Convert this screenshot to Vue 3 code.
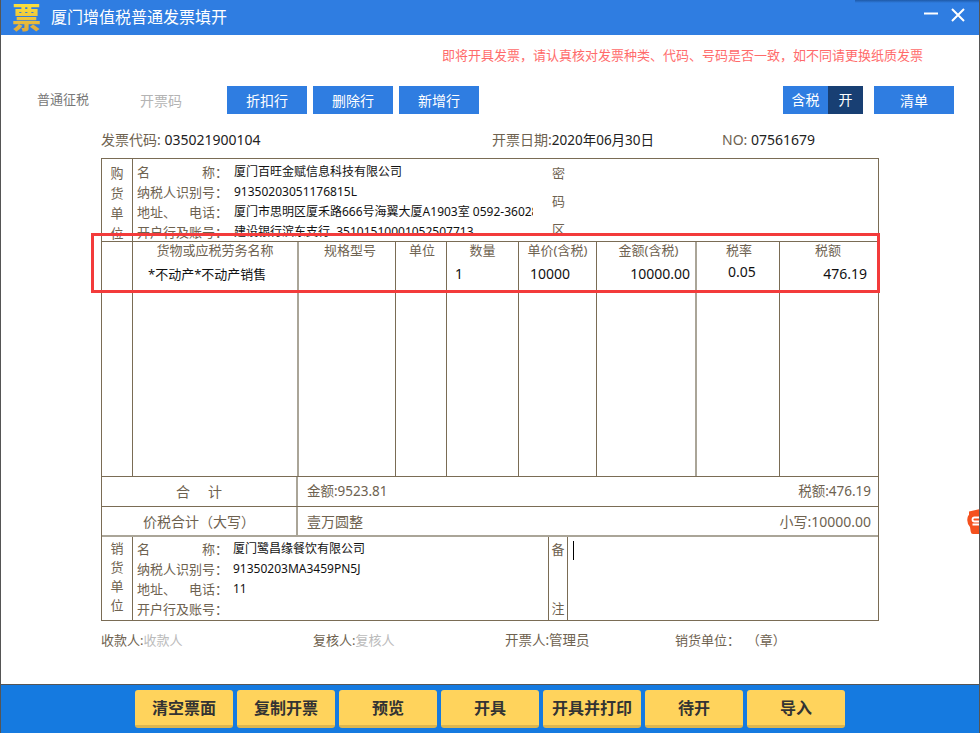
<script setup>
const topButtons = ['折扣行', '删除行', '新增行']
const buyer = [
  { label: ['名', '称：'], value: '厦门百旺金赋信息科技有限公司' },
  { label: ['纳税人识别号：'], value: '91350203051176815L' },
  { label: ['地址、', '电话：'], value: '厦门市思明区厦禾路666号海翼大厦A1903室 0592-3602888' },
  { label: ['开户行及账号：'], value: '建设银行滨东支行\u00a0 35101510001052507713' }
]
const seller = [
  { label: ['名', '称：'], value: '厦门鹭昌缘餐饮有限公司' },
  { label: ['纳税人识别号：'], value: '91350203MA3459PN5J' },
  { label: ['地址、', '电话：'], value: '11' },
  { label: ['开户行及账号：'], value: '' }
]
const columns = [
  { cls: 'c-blank', head: '', data: '' },
  { cls: 'c-name soft', head: '货物或应税劳务名称', data: '*不动产*不动产销售' },
  { cls: 'c-spec', head: '规格型号', data: '' },
  { cls: 'c-unit', head: '单位', data: '' },
  { cls: 'c-qty', head: '数量', data: '1' },
  { cls: 'c-price', head: '单价(含税)', data: '10000' },
  { cls: 'c-amount soft', head: '金额(含税)', data: '10000.00' },
  { cls: 'c-rate', head: '税率', data: '0.05' },
  { cls: 'c-tax', head: '税额', data: '476.19' }
]
const actions = ['清空票面', '复制开票', '预览', '开具', '开具并打印', '待开', '导入']
</script>

<template>
  <div class="window">
    <header class="titlebar">
      <span class="logo">票</span>
      <span class="title">厦门增值税普通发票填开</span>
      <div class="win-controls">
        <svg width="14" height="14" viewBox="0 0 14 14"><path d="M0 5.500h14" stroke="#fff" stroke-width="2" /></svg>
        <svg width="14" height="14" viewBox="0 0 14 14"><path d="M1 1l12 12M13 1L1 13" stroke="#fff" stroke-width="2" /></svg>
      </div>
      <i class="top-shadow"></i>
    </header>

    <main class="body">
      <p class="notice">即将开具发票，请认真核对发票种类、代码、号码是否一致，如不同请更换纸质发票</p>

      <div class="toolbar">
        <span class="tab">普通征税</span>
        <span class="tab-off">开票码</span>
        <button v-for="b in topButtons" :key="b" class="blue-btn">{{ b }}</button>
        <div class="toolbar-right">
          <div class="toggle"><span class="toggle-a">含税</span><span class="toggle-b">开</span></div>
          <button class="blue-btn list-btn">清单</button>
        </div>
      </div>

      <div class="meta">
        <span class="meta-code"><i>发票代码:</i> 035021900104</span>
        <span class="meta-date"><i>开票日期:</i><b>2020年06月30日</b></span>
        <span class="meta-no"><i>NO:</i> 07561679</span>
      </div>

      <section class="invoice">
        <div class="party buyer">
          <div class="side"><span>购</span><span>货</span><span>单</span><span>位</span></div>
          <div class="fields">
            <div v-for="f in buyer" :key="f.label.join()" class="field">
              <span class="label"><span v-for="p in f.label" :key="p">{{ p }}</span></span>
              <span class="value">{{ f.value }}</span>
            </div>
          </div>
          <div class="secret"><span>密</span><span>码</span><span>区</span></div>
        </div>

        <div class="items">
          <div v-for="c in columns" :key="c.cls" class="col" :class="c.cls">
            <div class="col-head">{{ c.head }}</div>
            <div class="col-data">{{ c.data }}</div>
          </div>
        </div>

        <div class="sum-row">
          <div class="sum-left">合&nbsp;&nbsp;&nbsp;&nbsp;&nbsp;计</div>
          <div class="sum-right amounts"><span>金额:9523.81</span><span>税额:476.19</span></div>
        </div>
        <div class="sum-row total">
          <div class="sum-left">价税合计（大写）</div>
          <div class="sum-right"><span>壹万圆整</span><span>小写:10000.00</span></div>
        </div>

        <div class="party seller">
          <div class="side"><span>销</span><span>货</span><span>单</span><span>位</span></div>
          <div class="fields">
            <div v-for="f in seller" :key="f.label.join()" class="field">
              <span class="label"><span v-for="p in f.label" :key="p">{{ p }}</span></span>
              <span class="value">{{ f.value }}</span>
            </div>
          </div>
          <div class="remark-side"><span>备</span><span>注</span></div>
          <div class="remark"><i class="caret"></i></div>
        </div>
      </section>

      <div class="signers">
        <span class="s1">收款人:<em>收款人</em></span>
        <span class="s2">复核人:<em>复核人</em></span>
        <span class="s3">开票人:管理员</span>
        <span class="s4">销货单位：&nbsp; （章）</span>
      </div>

      <div class="red-box"></div>
      <svg class="float-icon" width="13" height="25" viewBox="0 0 13 25">
        <path d="M2 2.500L13 0v25H6Q4 25 3.700 22.500L3 18Q0 14.500 .3 10.500T2 6z" fill="#f4511e" />
        <path d="M13 8.500H7.500Q5.500 8.500 5.500 10.500T7.500 12.500H13M5.500 15.500H13" fill="none" stroke="#fff" stroke-width="1.800" />
      </svg>
    </main>

    <footer class="footer">
      <button v-for="a in actions" :key="a" class="yellow-btn">{{ a }}</button>
    </footer>
  </div>
</template>

<style scoped>
.window {
  position: relative;
  box-sizing: border-box;
  display: flex;
  flex-direction: column;
  width: 980px;
  height: 733px;
  overflow: hidden;
  background: #fff;
  border-left: 1px solid #555;
  border-right: 1px solid #555;
  font-family: "Noto Sans", "Noto Sans CJK SC", sans-serif;
  font-size: 13px;
  color: #6e6250;
}
.titlebar {
  position: relative;
  display: flex;
  align-items: center;
  flex: none;
  height: 35px;
  margin: 0 -1px;
  padding-left: 12px;
  background: #2f7de1;
  color: #fff;
}
.top-shadow {
  position: absolute;
  top: 0;
  right: 0;
  width: 125px;
  height: 3px;
  background: linear-gradient(#1f5aa8, #2f7de1);
}
.logo {
  flex: none;
  width: 30px;
  font-size: 29px;
  line-height: 35px;
  font-weight: 900;
  background: linear-gradient(#ffe83c, #dca23a);
  -webkit-background-clip: text;
  background-clip: text;
  color: transparent;
}
.title {
  margin-left: 9px;
  font-size: 16px;
  line-height: 35px;
}
.win-controls {
  display: flex;
  gap: 13px;
  margin-left: auto;
  margin-right: 15px;
  margin-top: -6px;
}
.body {
  position: relative;
  flex: 1;
  min-height: 0;
}
.notice {
  margin: 0;
  padding: 11px 56px 0 0;
  height: 39px;
  box-sizing: border-box;
  text-align: right;
  line-height: 18px;
  color: #ff6b6b;
}
.toolbar {
  display: flex;
  align-items: center;
  height: 28px;
  margin-left: 36px;
  margin-right: 25px;
  margin-top: 12px;
}
.tab { width: 103px; padding-bottom: 3px; color: #777; }
.tab-off { width: 87px; font-size: 14px; color: #b4b4b4; }
.blue-btn {
  width: 80px;
  height: 28px;
  margin-right: 6px;
  padding: 0;
  border: 0;
  background: #2f7de1;
  color: #fff;
  font: inherit;
  font-size: 14px;
}
.toolbar-right {
  display: flex;
  margin-left: auto;
}
.toggle {
  display: flex;
  height: 28px;
  margin-right: 11px;
  line-height: 28px;
  font-size: 14px;
  color: #fff;
  text-align: center;
}
.toggle-a { width: 45px; background: #2f7de1; }
.toggle-b { width: 35px; background: #183f73; }
.list-btn { margin-right: 0; }
.meta {
  display: flex;
  height: 20px;
  margin-top: 16px;
  margin-left: 100px;
  line-height: 20px;
  font-size: 14px;
  color: #222;
}
.meta i { font-style: normal; color: #6e6250; }
.meta b { font-weight: 400; font-size: 13.5px; }
.meta-code { width: 391px; }
.meta-date { width: 230px; }
.invoice {
  box-sizing: border-box;
  width: 778px;
  margin-top: 8px;
  margin-left: 100px;
  border: 1px solid #7a6c55;
}
.party { display: flex; }
.buyer {
  height: 83px;
  box-sizing: border-box;
  overflow: hidden;
  border-bottom: 1px solid #7a6c55;
}
.seller { height: 83px; }
.side {
  box-sizing: border-box;
  display: flex;
  flex-direction: column;
  flex: none;
  width: 31px;
  padding-top: 4px;
  border-right: 1px solid #7a6c55;
  line-height: 20px;
  text-align: center;
}
.fields {
  box-sizing: border-box;
  flex: none;
  width: 400px;
  padding-left: 4px;
  padding-top: 3px;
  overflow: hidden;
}
.seller .fields { width: 415px; padding-top: 2px; }
.seller .side { padding-top: 2px; line-height: 19px; }
.field {
  display: flex;
  height: 20px;
  line-height: 20px;
  white-space: nowrap;
}
.label {
  display: flex;
  justify-content: space-between;
  flex: none;
  width: 91px;
  margin-right: 6px;
}
.value {
  font-size: 12px;
  color: #111;
}
.seller .label { margin-right: 5px; }
.secret {
  display: flex;
  flex-direction: column;
  gap: 8px;
  margin-left: 19px;
  padding-top: 4px;
  line-height: 20px;
}
.items {
  display: flex;
  height: 234px;
}
.col {
  box-sizing: border-box;
  flex: none;
  border-right: 1px solid #7a6c55;
}
.col.soft { border-right: 2px solid #aaa598; }
.c-tax { border-right: 0; }
.c-blank { width: 31px; }
.c-name { width: 166px; }
.c-spec { width: 97px; }
.c-unit { width: 51px; }
.c-qty { width: 72px; }
.c-price { width: 78px; }
.c-amount { width: 100px; }
.c-rate { width: 83px; }
.c-tax { width: 98px; }
.col-head {
  height: 20px;
  line-height: 17px;
  text-align: center;
}
.c-spec .col-head { padding-left: 6px; }
.c-unit .col-head { padding-left: 2px; }
.c-amount .col-head { padding-left: 5px; }
.c-rate .col-head { padding-left: 2px; }
.c-tax .col-head { padding-right: 2px; }
.col-data {
  height: 24px;
  line-height: 24px;
  font-size: 14px;
  color: #111;
  white-space: nowrap;
}
.c-name .col-data { padding-left: 15px; font-size: 13px; }
.c-qty .col-data { padding-left: 8px; }
.c-price .col-data { padding-left: 11px; }
.c-amount .col-data { padding-right: 5px; text-align: right; }
.c-rate .col-data { margin-top: -2px; padding-left: 31px; }
.c-tax .col-data { padding-right: 11px; text-align: right; }
.sum-row {
  display: flex;
  box-sizing: border-box;
  height: 30px;
  border-top: 1px solid #7a6c55;
  line-height: 29px;
  font-size: 14px;
}
.sum-row.total { border-bottom: 2px solid #aaa598; height: 31px; }
.sum-left {
  box-sizing: border-box;
  width: 196px;
  border-right: 2px solid #aaa598;
  text-align: center;
}
.sum-right {
  display: flex;
  justify-content: space-between;
  flex: 1;
  padding: 0 7px 0 9px;
}
.amounts { font-size: 13.5px; }
.remark-side {
  box-sizing: border-box;
  display: flex;
  flex-direction: column;
  justify-content: space-between;
  flex: none;
  width: 20px;
  padding: 2px 0;
  border-left: 1px solid #7a6c55;
  border-right: 1px solid #7a6c55;
  line-height: 20px;
  text-align: center;
}
.remark {
  flex: 1;
  padding: 4px 0 0 5px;
}
.caret {
  display: block;
  width: 1px;
  height: 19px;
  background: #000;
}
.signers {
  display: flex;
  margin-top: 9px;
  margin-left: 100px;
  line-height: 20px;
}
.signers em { font-style: normal; color: #bbb; }
.s1 { width: 212px; }
.s2 { width: 192px; }
.s3 { width: 170px; font-size: 13.5px; }
.red-box {
  position: absolute;
  left: 90px;
  top: 198px;
  width: 789px;
  height: 60px;
  box-sizing: border-box;
  border: 3px solid #f33b3b;
}
.float-icon {
  position: absolute;
  right: -1px;
  top: 474px;
}
.footer {
  display: flex;
  gap: 4px;
  flex: none;
  box-sizing: border-box;
  height: 49px;
  margin: 0 -1px;
  padding: 5px 0 0 135px;
  border-top: 1px solid #555;
  background: #157ae0;
}
.yellow-btn {
  width: 98px;
  height: 38px;
  padding: 0 0 1px;
  border: 0;
  border-bottom: 3px solid #dcb650;
  border-radius: 3px;
  background: #ffd35c;
  color: #333;
  font: inherit;
  font-size: 16px;
  font-weight: 700;
}
</style>
